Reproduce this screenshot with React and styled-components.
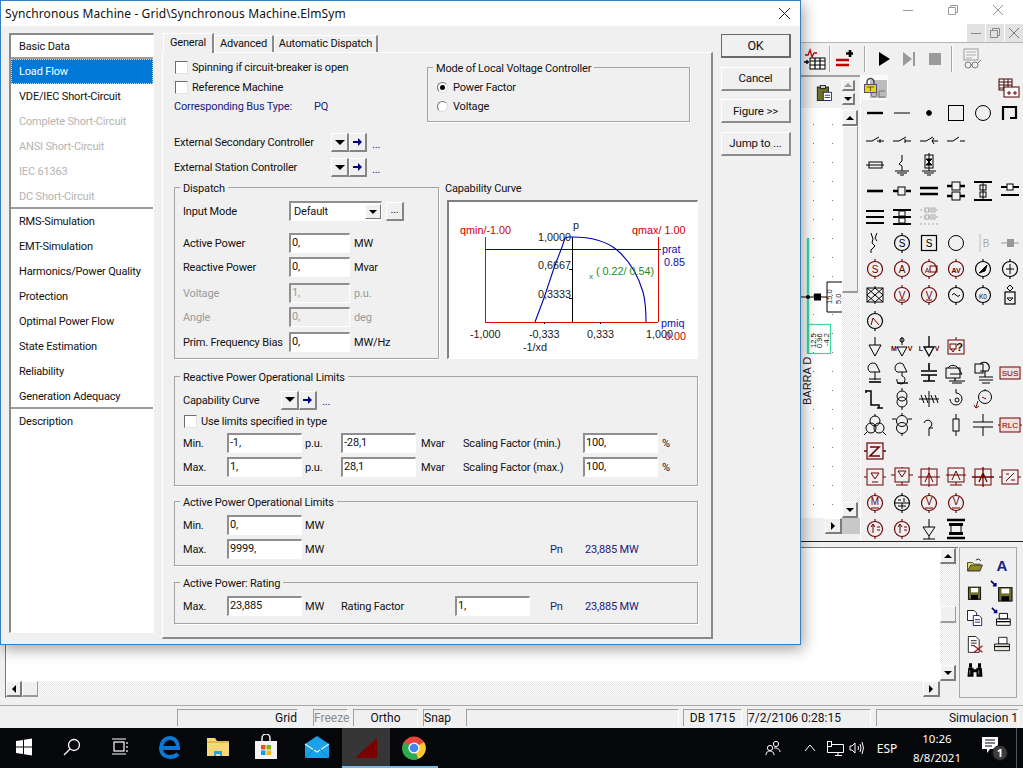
import styled, { createGlobalStyle } from "styled-components";

const UI_FONT = `"Roboto", "Liberation Sans", sans-serif`;
const SYS_FONT = `"Noto Sans", "Open Sans", sans-serif`;
const DARK_RED = "#6e0000";
const NAVY = "#20207a";

const GlobalStyle = createGlobalStyle`
  html, body {
    margin: 0;
    padding: 0;
    width: 1023px;
    height: 768px;
    overflow: hidden;
    background: #f0f0f0;
  }
  * { box-sizing: border-box; }
`;

/* ---------- main application window behind the dialog ---------- */

const Shell = styled.div`
  position: relative;
  width: 1023px;
  height: 768px;
  display: flex;
  flex-direction: column;
  overflow: hidden;
  background: #f0f0f0;
  font-family: ${UI_FONT};
`;
const AppTitle = styled.div`
  height: 24px;
  background: #fff;
  display: flex;
  justify-content: flex-end;
  align-items: flex-start;
  padding: 4px 19px 0 0;
  gap: 33px;
`;
const MdiBar = styled.div`
  height: 19px;
  background: #fff;
  border-bottom: 1px solid #b4b4b4;
  display: flex;
  justify-content: flex-end;
  gap: 1px;
`;
const MdiButton = styled.div`
  width: 18px;
  height: 18px;
  background: #e2e2e2;
  display: flex;
  align-items: center;
  justify-content: center;
`;
const Toolbar = styled.div`
  height: 32px;
  display: flex;
  align-items: center;
  padding-left: 803px;
`;
const ToolSlot = styled.div`
  width: 24px;
  height: 24px;
  margin-left: ${(p) => p.$ml || 0}px;
  display: flex;
`;
const ToolSep = styled.div`
  width: 2px;
  height: 26px;
  margin-left: ${(p) => p.$ml || 0}px;
  background: #a8a8a8;
  border-right: 1px solid #fff;
`;
const Workspace = styled.div`
  height: 466px;
  display: flex;
`;
const CanvasColumn = styled.div`
  flex: 1;
  display: flex;
  flex-direction: column;
`;
const DrawStrip = styled.div`
  height: 33px;
  border-top: 2px solid #a0a0a0;
  display: flex;
  align-items: center;
  padding-left: 815px;
`;
const MiniScroll = styled.div`
  margin-left: 9px;
  display: flex;
  flex-direction: column;
  gap: 2px;
`;
const CanvasRow = styled.div`
  height: 410px;
  display: flex;
`;
const Canvas = styled.div`
  position: relative;
  flex: 1;
  background-color: #fff;
  background-image: radial-gradient(circle, #777 0.6px, transparent 0.9px);
  background-size: 19px 19px;
  background-position: 6px 7px;
`;
const Diagram = styled.svg`
  position: absolute;
  right: 0;
  top: 0;
  width: 42px;
  height: 410px;
`;
const VScroll = styled.div`
  width: 18px;
  display: flex;
  flex-direction: column;
  padding-top: ${(p) => p.$pt || 0}px;
  background: repeating-conic-gradient(#e4e4e4 0 25%, #fff 0 50%) 0 0 / 2px 2px;
`;
const HScrollRow = styled.div`
  height: 16px;
  display: flex;
  justify-content: flex-end;
`;
const ScrollCorner = styled.div`
  width: 18px;
  background: #c8c8c8;
`;
const ScrollBtn = styled.div`
  width: ${(p) => p.$w || 16}px;
  height: ${(p) => p.$h || 16}px;
  flex: none;
  background: #f0f0f0;
  border-top: 1px solid #fff;
  border-left: 1px solid #fff;
  border-right: 2px solid #7c7c7c;
  border-bottom: 2px solid #7c7c7c;
  display: flex;
  align-items: center;
  justify-content: center;
`;
const Arrow = styled.span`
  width: 0;
  height: 0;
  border: ${(p) => (p.$big ? 5 : 4)}px solid transparent;
  ${(p) => p.$dir === "up" && `border-bottom-color: ${p.$c || "#000"}; border-top-width: 0;`}
  ${(p) => p.$dir === "down" && `border-top-color: ${p.$c || "#000"}; border-bottom-width: 0;`}
  ${(p) => p.$dir === "left" && `border-right-color: ${p.$c || "#000"}; border-left-width: 0;`}
  ${(p) => p.$dir === "right" && `border-left-color: ${p.$c || "#000"}; border-right-width: 0;`}
`;
const Thumb = styled.div`
  width: ${(p) => p.$w || 16}px;
  height: ${(p) => p.$h || 16}px;
  flex: none;
  background: #f0f0f0;
  border-top: 1px solid #fff;
  border-left: 1px solid #fff;
  border-right: 1px solid #9a9a9a;
  border-bottom: 2px solid #9a9a9a;
`;
const Spacer = styled.div`
  flex: 1;
`;
const Palette = styled.div`
  width: 163px;
  display: grid;
  grid-template-columns: repeat(6, 27px);
  grid-template-rows: 25px;
  grid-auto-rows: 26px;
  overflow: hidden;
  border-left: 1px solid #fff;
`;
const PaletteCell = styled.div`
  display: flex;
  align-items: center;
  justify-content: center;
  background: ${(p) => (p.$pressed ? "#fafafa" : "transparent")};
`;
const GlyphSvg = styled.svg`
  width: ${(p) => p.$size}px;
  height: ${(p) => p.$size}px;
  flex: none;
  fill: none;
  stroke-width: 1;
  stroke: #000;
`;
const DarkLine = styled.div`
  height: 1px;
  background: #222;
`;
const OutputArea = styled.div`
  height: 156px;
  padding: 5px 6px 0 5px;
  display: flex;
`;
const OutputMain = styled.div`
  flex: 1;
  display: flex;
  flex-direction: column;
  border-left: 1px solid #777;
  border-top: 1px solid #777;
  height: 151px;
`;
const OutputTop = styled.div`
  height: 133px;
  display: flex;
`;
const OutputText = styled.div`
  flex: 1;
  background: #fff;
`;
const OutputHScroll = styled.div`
  height: 16px;
  display: flex;
  background: repeating-conic-gradient(#e4e4e4 0 25%, #fff 0 50%) 0 0 / 2px 2px;
`;
const OutputCorner = styled.div`
  width: 18px;
  background: #f0f0f0;
`;
const OutputTools = styled.div`
  width: 58px;
  height: 151px;
  margin-left: 1px;
  border: 1px solid #a8a8a8;
  display: grid;
  grid-template-columns: 27px 27px;
  grid-auto-rows: 26.25px;
  justify-items: center;
  align-items: center;
  padding: 4px 0 0 1px;
`;
const StatusBar = styled.div`
  margin-top: 7px;
  height: 23px;
  border-top: 1px solid #a8a8a8;
  padding-top: 3px;
  display: flex;
  font-family: ${UI_FONT};
  font-size: 12px;
`;
const StatusCell = styled.div`
  width: ${(p) => p.$w}px;
  height: 17px;
  margin-left: ${(p) => p.$ml}px;
  border-top: 1px solid #a0a0a0;
  border-left: 1px solid #a0a0a0;
  border-right: 1px solid #fff;
  color: ${(p) => (p.$off ? "#8c8c8c" : "#111")};
  text-align: ${(p) => p.$align || "right"};
  line-height: 17px;
  white-space: nowrap;
`;

/* ---------- taskbar ---------- */

const Taskbar = styled.div`
  height: 40px;
  background: #05070a;
  display: flex;
  align-items: stretch;
  font-family: ${SYS_FONT};
  color: #fff;
`;
const TaskButton = styled.div`
  width: 48px;
  margin-left: ${(p) => p.$ml || 0}px;
  display: flex;
  align-items: center;
  justify-content: center;
  background: ${(p) => (p.$active ? "#363636" : "transparent")};
  border-bottom: 2px solid ${(p) => (p.$open ? "#76b9ed" : "transparent")};
  padding-top: ${(p) => (p.$open ? 2 : 0)}px;
`;
const Tray = styled.div`
  margin-left: auto;
  display: flex;
  align-items: stretch;
`;
const TrayItem = styled.div`
  width: ${(p) => p.$w}px;
  margin-left: ${(p) => p.$ml || 0}px;
  display: flex;
  align-items: center;
  justify-content: center;
  font-size: 12px;
  position: relative;
`;
const Clock = styled.div`
  width: 62px;
  display: flex;
  flex-direction: column;
  align-items: center;
  justify-content: center;
  gap: 3px;
  font-size: 11.5px;
  line-height: 16px;
`;
const ShowDesktop = styled.div`
  width: 7px;
  border-left: 1px solid #555;
`;
const NotifyIcon = styled.svg`
  margin: 0 0 6px -4px;
`;
const NotifyBadge = styled.span`
  position: absolute;
  left: 24px;
  top: 17px;
  width: 16px;
  height: 16px;
  border-radius: 50%;
  background: #3c3c3c;
  border: 1px solid #111;
  font-size: 11px;
  font-weight: 700;
  line-height: 14px;
  text-align: center;
`;

/* ---------- dialog ---------- */

const Dialog = styled.div`
  position: absolute;
  left: 0;
  top: 0;
  width: 801px;
  height: 645px;
  background: #f0f0f0;
  border: 1px solid #3580c0;
  box-shadow: 2px 4px 14px rgba(0, 0, 0, 0.38);
  display: flex;
  flex-direction: column;
  color: #111;
  font-family: ${UI_FONT};
  font-size: 11px;
  letter-spacing: -0.17px;
`;
const DialogTitle = styled.div`
  height: 25px;
  background: #fff;
  display: flex;
  align-items: center;
  justify-content: space-between;
  padding: 0 9px 0 4px;
  font-family: ${SYS_FONT};
  font-size: 12px;
  letter-spacing: 0.1px;
  color: #111;
`;
const DialogBody = styled.div`
  flex: 1;
  display: flex;
  padding: 7px 0 4px 8px;
`;
const NavList = styled.div`
  width: 145px;
  height: 600px;
  background: #fff;
  border-top: 2px solid #8a8a8a;
  border-left: 2px solid #8a8a8a;
  border-right: 1px solid #fff;
  border-bottom: 1px solid #fff;
  flex: none;
`;
const NavItem = styled.div`
  height: 25px;
  padding-left: 8px;
  display: flex;
  align-items: center;
  color: ${(p) => (p.$selected ? "#fff" : p.$off ? "#b4b4b4" : "#111")};
  background: ${(p) => (p.$selected ? "#0078d7" : "transparent")};
  outline: ${(p) => (p.$selected ? "1px dotted #c8dff2" : "none")};
  outline-offset: -1px;
  box-shadow: ${(p) => (p.$line ? "0 -2px 0 #9c9c9c" : "none")};
  &:first-child {
    height: 24px;
    padding-bottom: 1px;
  }
`;
const MainColumn = styled.div`
  width: 551px;
  margin-left: 8px;
  display: flex;
  flex-direction: column;
  flex: none;
`;
const TabRow = styled.div`
  height: 19px;
  display: flex;
  align-items: flex-end;
  padding-left: 1px;
  position: relative;
`;
const Tab = styled.div`
  width: ${(p) => p.$w}px;
  height: ${(p) => (p.$active ? 20 : 17)}px;
  margin-bottom: ${(p) => (p.$active ? -1 : 0)}px;
  padding-bottom: ${(p) => (p.$active ? 3 : 2)}px;
  background: #f0f0f0;
  border-top: 1px solid #fff;
  border-left: 1px solid #fff;
  border-right: 2px solid #8a8a8a;
  display: flex;
  align-items: center;
  justify-content: center;
  position: relative;
`;
const TabPanel = styled.div`
  height: 587px;
  border-top: 1px solid #fff;
  border-left: 1px solid #fff;
  border-right: 2px solid #8a8a8a;
  border-bottom: 2px solid #8a8a8a;
  padding: 4px 0 0 11px;
  display: flex;
  flex-direction: column;
`;
const TopRow = styled.div`
  display: flex;
  justify-content: space-between;
  height: 65px;
`;
const CheckColumn = styled.div`
  display: flex;
  flex-direction: column;
`;
const CheckRow = styled.div`
  height: ${(p) => p.$h || 20}px;
  display: flex;
  align-items: center;
  gap: 4px;
  color: ${(p) => p.$color || "inherit"};
`;
const CheckBox = styled.span`
  width: 13px;
  height: 13px;
  margin-left: 1px;
  background: #fff;
  border-top: 1px solid #6e6e6e;
  border-left: 1px solid #6e6e6e;
  border-right: 1px solid #e2e2e2;
  border-bottom: 1px solid #e2e2e2;
`;
const BusLabel = styled.span`
  width: 136px;
`;
const Group = styled.fieldset`
  margin: ${(p) => p.$mt || 0}px 0 0 0;
  width: ${(p) => p.$w}px;
  height: ${(p) => p.$h}px;
  padding: 5px 0 0 8px;
  min-width: 0;
  flex: none;
  border: 1px solid #a4a4a4;
  box-shadow: 1px 1px 0 #fff;
`;
const Legend = styled.legend`
  margin-left: -3px;
  padding: 2px 3px 0;
  height: 14px;
  line-height: 14px;
  color: #111;
`;
const ModeGroup = styled(Group)`
  margin-right: 21px;
  padding-top: 4px;
`;
const RadioRow = styled.div`
  height: 19px;
  display: flex;
  align-items: center;
  gap: 5px;
  margin-left: 1px;
`;
const Radio = styled.span`
  width: 11px;
  height: 11px;
  border-radius: 50%;
  background: #fff;
  border: 1px solid #777;
  border-bottom-color: #ddd;
  border-right-color: #ddd;
  display: flex;
  align-items: center;
  justify-content: center;
`;
const RadioDot = styled.span`
  width: 5px;
  height: 5px;
  border-radius: 50%;
  background: #000;
`;
const ControllerRow = styled.div`
  height: 25px;
  display: flex;
  align-items: center;
  margin-top: ${(p) => p.$mt || 0}px;
`;
const ControllerLabel = styled.span`
  width: ${(p) => p.$w}px;
  flex: none;
`;
const SplitButton = styled.div`
  width: 18px;
  height: 19px;
  flex: none;
  background: #f0f0f0;
  border-top: 1px solid #fff;
  border-left: 1px solid #fff;
  border-right: 2px solid #858585;
  border-bottom: 2px solid #858585;
  display: flex;
  align-items: center;
  justify-content: center;
`;
const Ellipsis = styled.span`
  margin-left: 5px;
  color: ${NAVY};
  align-self: flex-end;
  padding-bottom: 5px;
  line-height: 10px;
`;
const MiddleRow = styled.div`
  display: flex;
  gap: 6px;
  height: 179px;
`;
const FormRow = styled.div`
  height: 24px;
  margin-top: ${(p) => p.$mt || 0}px;
  display: flex;
  align-items: center;
  color: ${(p) => (p.$off ? "#9a9a9a" : "inherit")};
`;
const FormLabel = styled.span`
  width: 106px;
  flex: none;
  white-space: nowrap;
`;
const Field = styled.div`
  width: ${(p) => p.$w}px;
  height: 20px;
  flex: none;
  background: ${(p) => (p.$off ? "#f0f0f0" : "#fff")};
  color: ${(p) => (p.$off ? "#9a9a9a" : "#111")};
  border-top: 2px solid #8f8f8f;
  border-left: 2px solid #8f8f8f;
  border-right: 1px solid #fff;
  border-bottom: 1px solid #fff;
  padding-left: 1px;
  line-height: 16px;
  white-space: nowrap;
`;
const Unit = styled.span`
  margin-left: 4px;
`;
const Combo = styled(Field)`
  display: flex;
  justify-content: space-between;
  align-items: center;
  padding-left: 3px;
`;
const ComboBtn = styled.span`
  width: 16px;
  height: 15px;
  background: #f0f0f0;
  border-top: 1px solid #fff;
  border-left: 1px solid #fff;
  border-right: 1px solid #777;
  border-bottom: 1px solid #777;
  display: flex;
  align-items: center;
  justify-content: center;
`;
const SmallBtn = styled.div`
  width: 18px;
  height: 19px;
  margin-left: 4px;
  background: #f0f0f0;
  border-top: 1px solid #fff;
  border-left: 1px solid #fff;
  border-right: 2px solid #858585;
  border-bottom: 2px solid #858585;
  text-align: center;
  line-height: 13px;
`;
const CurveColumn = styled.div`
  width: 252px;
  display: flex;
  flex-direction: column;
`;
const CurveTitle = styled.div`
  height: 20px;
  padding-top: 1px;
  line-height: 15px;
`;
const PlotBox = styled.div`
  width: 251px;
  height: 159px;
  margin-left: 2px;
  background: #fff;
  border-top: 2px solid #808080;
  border-left: 2px solid #808080;
  border-right: 1px solid #fff;
  border-bottom: 1px solid #fff;
`;
const PlotSvg = styled.svg`
  display: block;
  margin: -2px 0 0 -2px;
  font-family: "Liberation Sans", sans-serif;
  font-size: 10.8px;
  letter-spacing: 0;
`;
const LimitGrid = styled.div`
  display: grid;
  grid-template-columns: ${(p) => p.$cols};
  grid-auto-rows: 24px;
  align-items: center;
  white-space: nowrap;
`;
const UnitCell = styled.span`
  padding-left: ${(p) => p.$pl ?? 4}px;
  color: ${(p) => (p.$navy ? NAVY : "inherit")};
`;
const ButtonColumn = styled.div`
  width: 70px;
  margin: 1px 0 0 8px;
  display: flex;
  flex-direction: column;
  gap: 8.5px;
`;
const DlgButton = styled.div`
  height: 24px;
  background: #f0f0f0;
  border-top: 1px solid ${(p) => (p.$def ? "#6a6a6a" : "#fff")};
  border-left: 1px solid ${(p) => (p.$def ? "#6a6a6a" : "#fff")};
  border-right: 2px solid ${(p) => (p.$def ? "#6a6a6a" : "#8c8c8c")};
  border-bottom: 2px solid ${(p) => (p.$def ? "#6a6a6a" : "#8c8c8c")};
  display: flex;
  align-items: center;
  justify-content: center;
  font-size: ${(p) => p.$fs || 11.5}px;
`;

/* ---------- small drawings ---------- */

const Glyph = ({ children, size = 24 }) => (
  <GlyphSvg viewBox="0 0 24 24" $size={size}>
    {children}
  </GlyphSvg>
);

const Letter = ({ x = 12, y = 15.5, s = 10, c = DARK_RED, w = 400, children }) => (
  <text x={x} y={y} fontSize={s} fill={c} stroke="none" textAnchor="middle" fontFamily="Liberation Sans, sans-serif" fontWeight={w}>
    {children}
  </text>
);

// round meter symbol with a lead on top and bottom
const Meter = ({ c = "#000", children }) => (
  <>
    <circle cx="12" cy="12" r="7.5" stroke={c} strokeWidth="1.15" />
    <path d="M12 2v2.5M12 19.5V22" stroke={c} strokeWidth="1.15" />
    {children}
  </>
);

const R = DARK_RED;

const PALETTE = [
  // lock row
  [
    <>
      <rect x="7" y="4" width="17" height="18" fill="#bcbcbc" stroke="none" />
      <circle cx="11" cy="18" r="3" stroke="#777" />
      <path d="M16 15h6M16 21h6M16 15v6" stroke="#777" />
      <path d="M4 9V6a3.5 3.5 0 0 1 7 0v3" stroke="#444" strokeWidth="1.4" />
      <rect x="1.5" y="8.5" width="12" height="8" fill="#e6d800" stroke="#555" />
      <path d="M4 11h7M7.5 11v4" stroke="#555" />
    </>,
    null, null, null, null,
    <>
      <rect x="1" y="3" width="13" height="11" fill="#fff" stroke="#400" />
      <path d="M1 6h13M1 9h13M1 12h13M6 3v11M10 3v11" stroke="#400" />
      <rect x="6" y="11" width="15" height="10" fill="#fff" stroke="#400" />
      <path d="M9 17h4M11 15v4M15 17h4M17 15v4" stroke={R} />
    </>,
  ],
  [
    <path d="M4 12h16" strokeWidth="2.4" />,
    <path d="M4 12h16" />,
    <circle cx="12" cy="12" r="2.4" fill="#000" />,
    <rect x="4.5" y="4.5" width="15" height="15" />,
    <circle cx="12" cy="12" r="7.5" />,
    <path d="M5 19V6h13v11h-6" strokeWidth="2.2" />,
  ],
  [
    <path d="M3 14h6l7-4M14 14h7M17 12v4" />,
    <path d="M3 14h6l7-4M15 14h6M15 12v4" />,
    <path d="M3 14h6l7-4M15 14h6M17 11l-2 3 2 3" />,
    <path d="M3 14h6l6-4M16 14h5" />,
    null, null,
  ],
  [
    <>
      <rect x="6" y="9" width="13" height="6" />
      <path d="M3 12h18" />
    </>,
    <path d="M12 2v6l-3 3 3 2v5M5 18h14M7 20h10M10 22h4" />,
    <>
      <rect x="8" y="2" width="8" height="13" />
      <path d="M12 0v15M12 15v3M5 18h14M7 20h10M10 22h4" />
      <path d="M9 6h6l-3 3zM9 12h6l-3-3z" fill="#000" />
    </>,
    null, null, null,
  ],
  [
    <path d="M4 12h16" strokeWidth="2.6" />,
    <>
      <path d="M3 12h5M16 12h5" strokeWidth="2.6" />
      <rect x="8" y="8" width="7" height="8" />
    </>,
    <path d="M3 9h18M3 15h18" strokeWidth="2.6" />,
    <>
      <path d="M3 7h5M16 7h5M3 17h5M16 17h5" strokeWidth="2.6" />
      <rect x="8" y="3" width="8" height="8" />
      <rect x="8" y="13" width="8" height="8" />
    </>,
    <>
      <path d="M3 3h18M3 21h18" strokeWidth="2.2" />
      <rect x="9" y="6" width="6" height="5" />
      <rect x="9" y="13" width="6" height="5" />
      <path d="M12 3v18" />
    </>,
    <>
      <path d="M3 8h18M3 16h18" strokeWidth="2" />
      <rect x="9" y="5" width="6" height="6" fill="#fff" />
    </>,
  ],
  [
    <path d="M3 6h18M3 12h18M3 18h18" strokeWidth="2.2" />,
    <>
      <path d="M3 5h18M3 12h18M3 19h18" strokeWidth="2" />
      <rect x="9" y="6" width="6" height="5" fill="#fff" />
      <rect x="9" y="13" width="6" height="5" fill="#fff" />
    </>,
    <>
      <path d="M3 5h18M3 12h18M3 19h18" stroke="#aaa" strokeDasharray="2 2" />
      <rect x="8" y="3" width="4" height="4" stroke="#aaa" />
      <rect x="14" y="3" width="4" height="4" stroke="#aaa" />
      <rect x="8" y="10" width="4" height="4" stroke="#aaa" />
      <rect x="14" y="10" width="4" height="4" stroke="#aaa" />
    </>,
    null, null, null,
  ],
  [
    <path d="M8 2l2 6-1 4 3 3-4 4v3M14 2l-2 5 2 3" />,
    <Meter>
      <Letter c="#000">S</Letter>
    </Meter>,
    <>
      <rect x="4.5" y="4.5" width="15" height="15" strokeWidth="1.2" />
      <Letter c="#000">S</Letter>
    </>,
    <circle cx="12" cy="12" r="7.5" />,
    <>
      <path d="M9 3v18" stroke="#bbb" />
      <Letter x={15} c="#aaa">B</Letter>
    </>,
    <>
      <path d="M3 12h18" stroke="#999" />
      <rect x="9" y="8" width="7" height="8" fill="#999" stroke="none" />
    </>,
  ],
  [
    <Meter c={R}><Letter>S</Letter></Meter>,
    <Meter c={R}><Letter>A</Letter></Meter>,
    <Meter c={R}><Letter x={10} s={7}>A</Letter><rect x="13" y="9" width="7" height="6" stroke={R} /></Meter>,
    <Meter c={R}><Letter s={7} w={700}>AV</Letter></Meter>,
    <Meter><path d="M8 16l8-8-2 6z" fill="#000" /></Meter>,
    <Meter><path d="M12 7v10M8 12h8" /></Meter>,
  ],
  [
    <>
      <rect x="4" y="5" width="16" height="14" />
      <path d="M4 5l16 14M20 5L4 19M4 12l8-7 8 7-8 7z" />
      <path d="M12 3v2M12 19v2" />
    </>,
    <Meter c={R}><Letter>V</Letter><path d="M9 17h6" stroke={R} /></Meter>,
    <Meter c={R}><Letter>V</Letter><path d="M9 17h6" stroke={R} /></Meter>,
    <Meter><path d="M8 12q2-3 4 0t4 0" /></Meter>,
    <Meter><Letter s={6.5} c="#000">K0</Letter></Meter>,
    <>
      <rect x="7" y="9" width="10" height="12" strokeWidth="1.2" />
      <path d="M12 2l3 3-3 3-3-3zM9 15h6l-3 3z" />
    </>,
  ],
  [
    <Meter><path d="M8 16l2-7 6 7" stroke={R} /></Meter>,
    null, null, null, null, null,
  ],
  [
    <path d="M12 2v8M6 10h12l-6 11z" />,
    <>
      <Letter x={4} s={7} w={700}>M</Letter>
      <Letter x={20} s={7} w={700}>V</Letter>
      <circle cx="12" cy="5" r="2" />
      <path d="M12 2v8M7 12h10l-5 9z" />
    </>,
    <>
      <Letter x={4} s={7} w={700}>L</Letter>
      <Letter x={20} s={7} w={700}>V</Letter>
      <path d="M12 1v11M7 12h10l-5 9z" strokeWidth="1.3" />
    </>,
    <>
      <rect x="4" y="5" width="16" height="14" stroke={R} />
      <path d="M12 2v3" stroke={R} />
      <Letter x={15.5} s={11} c="#300" w={700}>?</Letter>
      <rect x="6" y="9" width="6" height="5" stroke={R} />
      <path d="M7 14l2 3 2-3" stroke={R} />
    </>,
    null, null,
  ],
  [
    <>
      <path d="M7 11a5 5 0 0 1 6-8l4 8H7zM12 11v8M6 18h12" />
      <path d="M6 21h12" strokeWidth="1.6" />
    </>,
    <>
      <path d="M7 11a5 5 0 0 1 6-8l4 8H7z" />
      <path d="M12 11v4a4 4 0 1 1-5 3" />
      <path d="M7 22h11" strokeWidth="1.4" />
    </>,
    <path d="M12 2v7M4 10h16M4 14h16M12 14v6M6 20h12" strokeWidth="1.6" />,
    <>
      <rect x="2" y="7" width="14" height="10" />
      <path d="M4 7a6 6 0 0 1 10 0l4 6H6" />
      <path d="M11 17v3M5 20h16M8 22h10" strokeWidth="1.2" />
    </>,
    <>
      <rect x="4" y="3" width="8" height="9" />
      <path d="M9 3a5 5 0 0 1 8 7H9M14 10v6M8 16h14M8 19h14M11 22h8" strokeWidth="1.1" />
    </>,
    <>
      <rect x="2" y="6" width="20" height="12" fill="#f2dede" stroke={R} />
      <Letter y={15} s={8} c={R}>SUS</Letter>
    </>,
  ],
  [
    <path d="M3 4h5v14h8v3M14 21h6M3 3v3" strokeWidth="1.5" />,
    <>
      <circle cx="12" cy="9" r="5" />
      <circle cx="12" cy="15" r="5" />
      <path d="M12 1v3M12 20v3" />
    </>,
    <path d="M2 12h20M12 4v16M4 8l3 8M8 8l3 8M14 8l3 8M18 8l3 8" />,
    <>
      <path d="M12 2v4a6 6 0 1 1-6 6" />
      <circle cx="13" cy="13" r="2" />
    </>,
    <>
      <circle cx="14" cy="10" r="6.5" />
      <path d="M14 2v2M7 14l-2 6M3 18l2 3 3-2M11 10l4 2" stroke={R} />
    </>,
    null,
  ],
  [
    <>
      <circle cx="12" cy="8" r="5" />
      <circle cx="8" cy="15" r="5" />
      <circle cx="16" cy="15" r="5" />
      <path d="M12 1v2M4 19l-3 3M20 19l3 3" />
    </>,
    <>
      <circle cx="12" cy="8" r="5.5" />
      <circle cx="12" cy="15" r="5.5" />
      <path d="M12 0v3M12 20v3M2 6h4M18 6h4" />
    </>,
    <path d="M12 23v-8a4 4 0 1 0-5-5M12 15h4" />,
    <>
      <rect x="9" y="6" width="6" height="12" />
      <path d="M12 1v5M12 18v5" />
    </>,
    <path d="M12 1v8M2 9h20M2 14h20M12 14v9" />,
    <>
      <rect x="2" y="5" width="20" height="14" fill="#f2dede" stroke={R} />
      <path d="M0 12h2M22 12h2" stroke={R} />
      <Letter y={15} s={8} c={R}>RLC</Letter>
    </>,
  ],
  [
    <>
      <rect x="4" y="4" width="16" height="16" stroke={R} strokeWidth="1.2" />
      <path d="M7 8h9l-9 9h10M1 12h3M20 12h3" stroke={R} strokeWidth="1.6" />
    </>,
    null, null, null, null, null,
  ],
  [
    <>
      <rect x="4" y="4" width="16" height="16" stroke={R} />
      <path d="M8 8h8l-4 6zM9 17h6M1 12h3M20 12h3" stroke={R} />
    </>,
    <>
      <rect x="5" y="3" width="14" height="14" stroke={R} />
      <path d="M8 6h8l-4 6zM12 2v1M1 10h4M19 10h4M12 17v3M6 20h12" stroke={R} />
    </>,
    <>
      <rect x="4" y="4" width="16" height="16" stroke={R} />
      <path d="M1 12h22M8 17l4-9 4 9M12 2v20" stroke={R} />
    </>,
    <>
      <rect x="4" y="3" width="16" height="14" stroke={R} />
      <path d="M2 10h20M8 15l4-9 4 9M12 17v3M6 20h12" stroke={R} />
    </>,
    <>
      <rect x="4" y="4" width="16" height="16" stroke={R} />
      <path d="M1 12h22M8 17l4-9 4 9M12 2v20" stroke={R} strokeWidth="1.3" />
    </>,
    <>
      <rect x="4" y="5" width="16" height="14" stroke={R} />
      <path d="M1 12h3M20 12h3M8 16l8-8M8 9h3M13 15h4" stroke={R} />
    </>,
  ],
  [
    <Meter c={R}><Letter y={14}>M</Letter><path d="M8 17h8" stroke={R} /></Meter>,
    <Meter><path d="M5 12h14M8 9h3M14 7v4M8 15h8M12 12v6" /></Meter>,
    <Meter c={R}><Letter y={14}>V</Letter><path d="M8 17h8" stroke={R} /></Meter>,
    <Meter c={R}><Letter y={14}>V</Letter><path d="M8 17h8" stroke={R} /></Meter>,
    null, null,
  ],
  [
    <Meter c={R}><path d="M10 16V8M8 10l2-3 2 3M14 10h3M14 13h3" stroke={R} /></Meter>,
    <Meter c={R}><path d="M10 16V8M8 10l2-3 2 3M14 10h3M14 13h3" stroke={R} /></Meter>,
    <path d="M12 2v8M6 10h12l-6 9zM12 19v3M6 22h12" />,
    <>
      <path d="M3 3h18M3 21h18" strokeWidth="2.4" />
      <rect x="5" y="6" width="14" height="3" fill="#000" stroke="none" />
      <rect x="5" y="15" width="14" height="3" fill="#000" stroke="none" />
      <path d="M7 9v6M17 9v6" />
    </>,
    null, null,
  ],
];

const Plot = () => (
  <PlotSvg width="250" height="159" viewBox="0 0 250 159">
    <g shapeRendering="crispEdges" fill="none">
      <path d="M38 122V37M211 122V37M38 122h173" stroke="#d80808" />
      <path d="M38 49h176" stroke="#0000b0" />
      <path d="M125 37v85" stroke="#000" />
      <path d="M122 69h3M122 98h3M97 122v2M153 122v2" stroke="#000" />
    </g>
    <path
      d="M88 122L97 98L107 68L115 47L118 38L122 37L125 37C140 37 158 40 170 50C184 62 191 75 196 92C199 103 199 112 199 122"
      stroke="#0000b0"
      strokeWidth="1.1"
      fill="none"
    />
    <g fill="#1a1a1a">
      <text x="126" y="29">p</text>
      <text x="91" y="41">1,0000</text>
      <text x="91" y="69">0,6667</text>
      <text x="91" y="98">0,3333</text>
      <text x="23" y="138">-1,000</text>
      <text x="82" y="138">-0,333</text>
      <text x="140" y="138">0,333</text>
      <text x="199" y="138">1,000</text>
      <text x="76" y="151">-1/xd</text>
    </g>
    <g fill="#c80000">
      <text x="13" y="34">qmin/-1.00</text>
      <text x="185" y="34">qmax/ 1.00</text>
      <text x="218" y="140">0.00</text>
    </g>
    <g fill="#1010a8">
      <text x="215" y="53">prat</text>
      <text x="217" y="66">0.85</text>
      <text x="214" y="127">pmiq</text>
    </g>
    <g fill="#1f8a1f">
      <text x="149" y="75">( 0.22/ 0.54)</text>
      <text x="142" y="79" fontSize="8">x</text>
    </g>
  </PlotSvg>
);

const ArrowPair = () => (
  <>
    <SplitButton>
      <Arrow $dir="down" $big />
    </SplitButton>
    <SplitButton>
      <svg width="10" height="10" viewBox="0 0 10 10">
        <path d="M0 4h5V1l4 4-4 4V6H0z" fill="#000080" />
      </svg>
    </SplitButton>
  </>
);

const CapabilityRowLimits = ({ label, a, b, scaling, c }) => (
  <>
    <span>{label}</span>
    <Field $w={75}>{a}</Field>
    <UnitCell>p.u.</UnitCell>
    <Field $w={75}>{b}</Field>
    <UnitCell $pl={5}>Mvar</UnitCell>
    <span>{scaling}</span>
    <Field $w={75}>{c}</Field>
    <UnitCell>%</UnitCell>
  </>
);

const NAV = [
  { t: "Basic Data" },
  { t: "Load Flow", selected: true, line: true },
  { t: "VDE/IEC Short-Circuit" },
  { t: "Complete Short-Circuit", off: true },
  { t: "ANSI Short-Circuit", off: true },
  { t: "IEC 61363", off: true },
  { t: "DC Short-Circuit", off: true },
  { t: "RMS-Simulation", line: true },
  { t: "EMT-Simulation" },
  { t: "Harmonics/Power Quality" },
  { t: "Protection" },
  { t: "Optimal Power Flow" },
  { t: "State Estimation" },
  { t: "Reliability" },
  { t: "Generation Adequacy" },
  { t: "Description", line: true },
];

const ToolIcons = () => (
  <>
    <ToolSlot>
      <Glyph>
        <path d="M2 8h3l2-5 2 7 2-4h3" stroke="#c00000" strokeWidth="1.3" />
        <path d="M1 15h5M4 13v4" strokeWidth="1.4" />
        <rect x="7" y="11" width="15" height="11" fill="#fff" />
        <path d="M7 14h15M7 18h15M12 11v11M17 11v11" strokeWidth="1.2" />
      </Glyph>
    </ToolSlot>
    <ToolSep $ml={2} />
    <ToolSlot $ml={1}>
      <Glyph>
        <path d="M4 13h13M4 18h13" stroke="#c00000" strokeWidth="2.6" />
        <path d="M18 3v7M14 6.5h7" strokeWidth="2.6" />
      </Glyph>
    </ToolSlot>
    <ToolSep $ml={8} />
    <ToolSlot $ml={6}>
      <Glyph>
        <path d="M7 5l11 7-11 7z" fill="#000" stroke="none" />
      </Glyph>
    </ToolSlot>
    <ToolSlot $ml={1}>
      <Glyph>
        <path d="M6 5l9 7-9 7z" fill="#9a9a9a" stroke="none" />
        <path d="M17 5v14" stroke="#9a9a9a" strokeWidth="2" />
      </Glyph>
    </ToolSlot>
    <ToolSlot $ml={2}>
      <Glyph>
        <rect x="6" y="6" width="12" height="12" fill="#9a9a9a" stroke="none" />
      </Glyph>
    </ToolSlot>
    <ToolSep $ml={4} />
    <ToolSlot $ml={6}>
      <Glyph>
        <rect x="5" y="2" width="14" height="11" stroke="#999" fill="#f4f4f4" />
        <path d="M7 5h10M7 8h10M7 11h6" stroke="#aaa" />
        <circle cx="9" cy="18" r="3" stroke="#777" />
        <circle cx="16" cy="18" r="3" stroke="#777" />
        <path d="M12 18h1M19 16l3-3" stroke="#777" />
      </Glyph>
    </ToolSlot>
  </>
);

const SaveIcon = () => (
  <>
    <rect x="5" y="7" width="14" height="14" fill="#6e6e28" stroke="#000" />
    <rect x="8" y="8" width="8" height="5" fill="#fff" stroke="none" />
    <rect x="8" y="16" width="8" height="5" fill="#000" stroke="none" />
  </>
);

const OutputIcons = () => (
  <>
    <Glyph size={20}>
      <path d="M3 9h6l2 2h7v8H3z" fill="#e8d870" stroke="#333" />
      <path d="M3 19l4-7h14l-3 7z" fill="#8a8a20" stroke="#333" />
      <path d="M13 6q4-3 6 1" stroke="#000" />
    </Glyph>
    <Glyph size={18}>
      <Letter s={20} c="#1a1a8a" w={700} y={20}>A</Letter>
    </Glyph>
    <Glyph size={21}>
      <SaveIcon />
    </Glyph>
    <Glyph size={23}>
      <path d="M1 1l5 5M3 6h3V3" stroke="#000080" strokeWidth="1.8" />
      <g transform="translate(4 1)"><SaveIcon /></g>
    </Glyph>
    <Glyph size={20}>
      <path d="M3 3h8l3 3v9H3z" fill="#fff" stroke="#000" />
      <path d="M10 9h7l3 3v9H10z" fill="#fff" stroke="#000060" />
      <path d="M12 14h6M12 17h6" stroke="#000060" />
    </Glyph>
    <Glyph size={22}>
      <path d="M1 1l5 5M3 6h3V3" stroke="#000080" strokeWidth="1.8" />
      <path d="M9 7h9v6H9zM6 13h15v7H6z" fill="#fff" stroke="#000" />
      <path d="M6 16h15" stroke="#000" strokeWidth="1.4" />
    </Glyph>
    <Glyph size={20}>
      <path d="M4 3h9l4 4v15H4z" fill="#fff" stroke="#000" />
      <path d="M7 8h7M7 11h7M7 14h5" stroke="#000" />
      <path d="M11 14l10 8M21 14l-10 8" stroke="#a02020" strokeWidth="1.6" />
    </Glyph>
    <Glyph size={20}>
      <path d="M8 4h10v8H8z" fill="#fff" stroke="#000" />
      <path d="M3 12h18v8H3z" fill="#e8e8d8" stroke="#000" />
      <path d="M3 15h18" stroke="#000" strokeWidth="1.4" />
    </Glyph>
    <Glyph size={18}>
      <path d="M3 9h7v12H2zM14 9h7l1 12h-8zM10 11h4v4h-4z" fill="#000" stroke="none" />
      <path d="M4 3h4v6H4zM16 3h4v6h-4z" fill="#000" stroke="none" />
      <path d="M5 12v6M17 12v6" stroke="#aaa" />
    </Glyph>
  </>
);

const TaskIcons = () => (
  <>
    <TaskButton>
      <svg width="18" height="18" viewBox="0 0 18 18">
        <path d="M1 3l7-1v6.5H1zM9 1.8L17 .6v7.9H9zM1 9.5h7V16l-7-1zM9 9.5h8v7.9l-8-1.2z" fill="#fff" />
      </svg>
    </TaskButton>
    <TaskButton>
      <svg width="18" height="18" viewBox="0 0 18 18" fill="none" stroke="#fff" strokeWidth="1.3">
        <circle cx="11" cy="7" r="5.5" />
        <path d="M7 11l-6 6" />
      </svg>
    </TaskButton>
    <TaskButton>
      <svg width="18" height="18" viewBox="0 0 18 18" fill="none" stroke="#fff" strokeWidth="1.2">
        <rect x="3" y="4" width="10" height="9" />
        <path d="M1 1h14M1 16h14M16 4v2M16 8v2M16 12v2" />
      </svg>
    </TaskButton>
    <TaskButton $ml={2}>
      <svg width="22" height="24" viewBox="0 0 22 24" fill="none" stroke="#0a78d4" strokeWidth="4">
        <path d="M3 13h16c0-6-3-10-8-10S3 6 2 13c0 6 4 9 9 9 3 0 6-1 8-3" />
      </svg>
    </TaskButton>
    <TaskButton>
      <svg width="24" height="22" viewBox="0 0 24 22">
        <path d="M1 2h8l2 3h12v15H1z" fill="#f6d87c" />
        <rect x="1" y="5" width="22" height="2" fill="#e0b94e" />
        <path d="M8 20v-5h8v5h-2v-2h-4v2z" fill="#2da1e0" />
      </svg>
    </TaskButton>
    <TaskButton>
      <svg width="24" height="26" viewBox="0 0 24 26">
        <path d="M8 7V4a4 4 0 0 1 8 0v3" fill="none" stroke="#eee" strokeWidth="1.5" />
        <rect x="1" y="7" width="22" height="18" fill="#f4f4f4" />
        <rect x="7" y="11" width="4.5" height="4.5" fill="#f25022" />
        <rect x="12.5" y="11" width="4.5" height="4.5" fill="#7fba00" />
        <rect x="7" y="16.5" width="4.5" height="4.5" fill="#00a4ef" />
        <rect x="12.5" y="16.5" width="4.5" height="4.5" fill="#ffb900" />
      </svg>
    </TaskButton>
    <TaskButton $ml={3}>
      <svg width="26" height="24" viewBox="0 0 26 24">
        <path d="M1 9L13 1l12 8v14H1z" fill="#1ba1e8" />
        <path d="M1 9l12 8 12-8" fill="none" stroke="#d8f0ff" strokeWidth="1.2" />
        <path d="M1 23l9-9M25 23l-9-9" stroke="#0c7cc4" />
      </svg>
    </TaskButton>
    <TaskButton $ml={1} $active $open>
      <svg width="22" height="20" viewBox="0 0 22 20">
        <path d="M0 20L22 0v20z" fill="#7b0000" />
      </svg>
    </TaskButton>
    <TaskButton $open>
      <svg width="24" height="24" viewBox="0 0 24 24">
        <circle cx="12" cy="12" r="11.5" fill="#e8453c" />
        <path d="M12 12L22 6a11.5 11.5 0 0 1-6 17z" fill="#fcc934" />
        <path d="M12 12l4 11A11.5 11.5 0 0 1 2 6z" fill="#2da94f" />
        <circle cx="12" cy="12" r="5.6" fill="#fff" />
        <circle cx="12" cy="12" r="4.3" fill="#4285f4" />
      </svg>
    </TaskButton>
  </>
);

const TrayIcons = () => (
  <Tray>
    <TrayItem $w={32}>
      <svg width="16" height="16" viewBox="0 0 16 16" fill="none" stroke="#fff">
        <circle cx="5" cy="8" r="2.6" />
        <path d="M1 15c0-3 2-4 4-4s4 1 4 4" />
        <circle cx="11" cy="4" r="2.6" />
        <path d="M9 8c3-.5 6 1 6 4" />
      </svg>
    </TrayItem>
    <TrayItem $w={24} $ml={9}>
      <svg width="12" height="8" viewBox="0 0 12 8" fill="none" stroke="#fff">
        <path d="M1 7l5-6 5 6" />
      </svg>
    </TrayItem>
    <TrayItem $w={26}>
      <svg width="17" height="15" viewBox="0 0 17 15" fill="none" stroke="#fff">
        <path d="M.5 3.5h16v8H5M8 14.5h7M11 11.5v3" />
        <rect x=".5" y=".5" width="4" height="5" fill="#05070a" />
        <path d="M.5 5.5v6H5" />
      </svg>
    </TrayItem>
    <TrayItem $w={18}>
      <svg width="16" height="14" viewBox="0 0 16 14" fill="none" stroke="#fff">
        <path d="M1 5h2l3-3v10L3 9H1zM9 5q1 2 0 4M11 3q2 4 0 8M13 1q3 6 0 12" />
      </svg>
    </TrayItem>
    <TrayItem $w={38} $ml={2}>ESP</TrayItem>
    <Clock>
      <span>10:26</span>
      <span>8/8/2021</span>
    </Clock>
    <TrayItem $w={48}>
      <NotifyIcon width="16" height="17" viewBox="0 0 16 17">
        <path d="M0 0h16v12H8l-3 4v-4H0z" fill="#fff" />
        <path d="M3 3h10M3 6h10M3 9h7" stroke="#05070a" />
      </NotifyIcon>
      <NotifyBadge>1</NotifyBadge>
    </TrayItem>
    <ShowDesktop />
  </Tray>
);

const WindowIcon = ({ kind, c = "#999" }) => (
  <svg width="12" height="12" viewBox="0 0 12 12" fill="none" stroke={c}>
    {kind === "min" && <path d="M1 6.5h10" />}
    {kind === "max" && <path d="M1.5 3.5h7v7h-7zM3.5 3.5v-2h7v7h-2" />}
    {kind === "close" && <path d="M1 1l10 10M11 1L1 11" />}
  </svg>
);

export default function App() {
  return (
    <Shell>
      <GlobalStyle />
      <AppTitle>
        <WindowIcon kind="min" />
        <WindowIcon kind="max" />
        <WindowIcon kind="close" />
      </AppTitle>
      <MdiBar>
        <MdiButton><WindowIcon kind="min" c="#888" /></MdiButton>
        <MdiButton><WindowIcon kind="max" c="#888" /></MdiButton>
        <MdiButton><WindowIcon kind="close" c="#777" /></MdiButton>
      </MdiBar>
      <Toolbar>
        <ToolIcons />
      </Toolbar>
      <Workspace>
        <CanvasColumn>
          <DrawStrip>
            <Glyph size={18}>
              <rect x="3" y="4" width="15" height="18" fill="#6e6e28" stroke="#000" />
              <rect x="7" y="2" width="7" height="4" fill="#ccc" stroke="#000" />
              <rect x="11" y="11" width="11" height="11" fill="#fff" stroke="#000060" />
              <path d="M13 15h7M13 18h7" stroke="#000060" />
            </Glyph>
            <MiniScroll>
              <ScrollBtn $w={13} $h={11}><Arrow $dir="up" $c="#999" /></ScrollBtn>
              <ScrollBtn $w={13} $h={12}><Arrow $dir="down" /></ScrollBtn>
            </MiniScroll>
          </DrawStrip>
          <CanvasRow>
            <Canvas>
              <Diagram viewBox="800 108 42 410">
                <path d="M808 238v116" stroke="#38d8a0" strokeWidth="2.5" />
                <path d="M801 297h26M827 282h16v30h-16z" stroke="#000" fill="none" />
                <circle cx="808" cy="297" r="2" fill="#000" />
                <rect x="814" y="293.5" width="7" height="7" fill="#000" />
                <rect x="808.5" y="324.5" width="22" height="29" fill="none" stroke="#38d8a0" strokeWidth="1.2" />
                <g fontFamily="Liberation Sans, sans-serif" fontSize="7.5" fill="#222">
                  <text transform="rotate(-90 832 304)" x="832" y="304">15.0</text>
                  <text transform="rotate(-90 841 304)" x="841" y="304">5.0</text>
                  <text transform="rotate(-90 816 348)" x="816" y="348">12.5</text>
                  <text transform="rotate(-90 822 348)" x="822" y="348">0.96</text>
                  <text transform="rotate(-90 829 346)" x="829" y="346">-4.2</text>
                </g>
                <text transform="rotate(-90 811 405)" x="811" y="405" fontFamily="Liberation Sans, sans-serif" fontSize="11" fill="#222">BARRA D</text>
              </Diagram>
            </Canvas>
            <VScroll $pt={2}>
              <ScrollBtn><Arrow $dir="up" /></ScrollBtn>
              <Thumb $h={167} />
              <Spacer />
              <ScrollBtn><Arrow $dir="down" /></ScrollBtn>
            </VScroll>
          </CanvasRow>
          <HScrollRow>
            <ScrollBtn $w={17}><Arrow $dir="right" /></ScrollBtn>
            <ScrollCorner />
          </HScrollRow>
        </CanvasColumn>
        <Palette>
          {PALETTE.flat().map((icon, i) => (
            <PaletteCell key={i} $pressed={i === 0}>
              {icon && <Glyph>{icon}</Glyph>}
            </PaletteCell>
          ))}
        </Palette>
      </Workspace>
      <DarkLine />
      <OutputArea>
        <OutputMain>
          <OutputTop>
            <OutputText />
            <VScroll>
              <ScrollBtn><Arrow $dir="up" /></ScrollBtn>
              <Spacer />
              <Thumb $h={17} />
              <Spacer />
              <ScrollBtn><Arrow $dir="down" /></ScrollBtn>
            </VScroll>
          </OutputTop>
          <OutputHScroll>
            <ScrollBtn><Arrow $dir="left" /></ScrollBtn>
            <Thumb />
            <Spacer />
            <ScrollBtn $w={17}><Arrow $dir="right" /></ScrollBtn>
            <OutputCorner />
          </OutputHScroll>
        </OutputMain>
        <OutputTools>
          <OutputIcons />
        </OutputTools>
      </OutputArea>
      <StatusBar>
        <StatusCell $w={121} $ml={177}>Grid</StatusCell>
        <StatusCell $w={35} $ml={15} $off $align="center">Freeze</StatusCell>
        <StatusCell $w={65} $ml={5} $align="center">Ortho</StatusCell>
        <StatusCell $w={28} $ml={5} $align="center">Snap</StatusCell>
        <StatusCell $w={213} $ml={15} />
        <StatusCell $w={59} $ml={4} $align="center">DB 1715</StatusCell>
        <StatusCell $w={124} $ml={5} $align="left">7/2/2106 0:28:15</StatusCell>
        <StatusCell $w={143} $ml={5}>Simulacion 1</StatusCell>
      </StatusBar>
      <Taskbar>
        <TaskIcons />
        <TrayIcons />
      </Taskbar>

      <Dialog>
        <DialogTitle>
          <span>Synchronous Machine - Grid\Synchronous Machine.ElmSym</span>
          <svg width="13" height="13" viewBox="0 0 13 13" stroke="#222" fill="none">
            <path d="M1 1l11 11M12 1L1 12" />
          </svg>
        </DialogTitle>
        <DialogBody>
          <NavList>
            {NAV.map((n) => (
              <NavItem key={n.t} $selected={n.selected} $off={n.off} $line={n.line}>
                {n.t}
              </NavItem>
            ))}
          </NavList>
          <MainColumn>
            <TabRow>
              <Tab $w={51} $active>General</Tab>
              <Tab $w={60}>Advanced</Tab>
              <Tab $w={104}>Automatic Dispatch</Tab>
            </TabRow>
            <TabPanel>
              <TopRow>
                <CheckColumn>
                  <CheckRow>
                    <CheckBox />
                    Spinning if circuit-breaker is open
                  </CheckRow>
                  <CheckRow>
                    <CheckBox />
                    Reference Machine
                  </CheckRow>
                  <CheckRow $h={19} $color={NAVY}>
                    <BusLabel>Corresponding Bus Type:</BusLabel>
                    PQ
                  </CheckRow>
                </CheckColumn>
                <ModeGroup $mt={3} $w={263} $h={62}>
                  <Legend>Mode of Local Voltage Controller</Legend>
                  <RadioRow>
                    <Radio><RadioDot /></Radio>
                    Power Factor
                  </RadioRow>
                  <RadioRow>
                    <Radio />
                    Voltage
                  </RadioRow>
                </ModeGroup>
              </TopRow>
              <ControllerRow $mt={8}>
                <ControllerLabel $w={157}>External Secondary Controller</ControllerLabel>
                <ArrowPair />
                <Ellipsis>...</Ellipsis>
              </ControllerRow>
              <ControllerRow>
                <ControllerLabel $w={157}>External Station Controller</ControllerLabel>
                <ArrowPair />
                <Ellipsis>...</Ellipsis>
              </ControllerRow>
              <MiddleRow>
                <Group $w={265} $h={179}>
                  <Legend>Dispatch</Legend>
                  <FormRow>
                    <FormLabel>Input Mode</FormLabel>
                    <Combo $w={93}>
                      Default
                      <ComboBtn><Arrow $dir="down" /></ComboBtn>
                    </Combo>
                    <SmallBtn>...</SmallBtn>
                  </FormRow>
                  <FormRow $mt={8}>
                    <FormLabel>Active Power</FormLabel>
                    <Field $w={61}>0,</Field>
                    <Unit>MW</Unit>
                  </FormRow>
                  <FormRow>
                    <FormLabel>Reactive Power</FormLabel>
                    <Field $w={61}>0,</Field>
                    <Unit>Mvar</Unit>
                  </FormRow>
                  <FormRow $mt={2} $off>
                    <FormLabel>Voltage</FormLabel>
                    <Field $w={61} $off>1,</Field>
                    <Unit>p.u.</Unit>
                  </FormRow>
                  <FormRow $off>
                    <FormLabel>Angle</FormLabel>
                    <Field $w={61} $off>0,</Field>
                    <Unit>deg</Unit>
                  </FormRow>
                  <FormRow $mt={1}>
                    <FormLabel>Prim. Frequency Bias</FormLabel>
                    <Field $w={61}>0,</Field>
                    <Unit>MW/Hz</Unit>
                  </FormRow>
                </Group>
                <CurveColumn>
                  <CurveTitle>Capability Curve</CurveTitle>
                  <PlotBox>
                    <Plot />
                  </PlotBox>
                </CurveColumn>
              </MiddleRow>
              <Group $mt={10} $w={524} $h={117}>
                <Legend>Reactive Power Operational Limits</Legend>
                <FormRow>
                  <ControllerLabel $w={98}>Capability Curve</ControllerLabel>
                  <ArrowPair />
                  <Ellipsis>...</Ellipsis>
                </FormRow>
                <CheckRow $h={19}>
                  <CheckBox />
                  Use limits specified in type
                </CheckRow>
                <LimitGrid $cols="44px 74px 40px 75px 47px 120px 75px auto">
                  <CapabilityRowLimits label="Min." a="-1," b="-28,1" scaling="Scaling Factor (min.)" c="100," />
                  <CapabilityRowLimits label="Max." a="1," b="28,1" scaling="Scaling Factor (max.)" c="100," />
                </LimitGrid>
              </Group>
              <Group $mt={8} $w={524} $h={72}>
                <Legend>Active Power Operational Limits</Legend>
                <LimitGrid $cols="44px 74px 249px 35px auto">
                  <span>Min.</span>
                  <Field $w={75}>0,</Field>
                  <UnitCell>MW</UnitCell>
                  <span />
                  <span />
                  <span>Max.</span>
                  <Field $w={75}>9999,</Field>
                  <UnitCell>MW</UnitCell>
                  <UnitCell $navy $pl={0}>Pn</UnitCell>
                  <UnitCell $navy $pl={0}>23,885 MW</UnitCell>
                </LimitGrid>
              </Group>
              <Group $mt={9} $w={524} $h={49}>
                <Legend>Active Power: Rating</Legend>
                <LimitGrid $cols="44px 74px 40px 114px 75px 20px 35px auto">
                  <span>Max.</span>
                  <Field $w={75}>23,885</Field>
                  <UnitCell>MW</UnitCell>
                  <span>Rating Factor</span>
                  <Field $w={75}>1,</Field>
                  <span />
                  <UnitCell $navy $pl={0}>Pn</UnitCell>
                  <UnitCell $navy $pl={0}>23,885 MW</UnitCell>
                </LimitGrid>
              </Group>
            </TabPanel>
          </MainColumn>
          <ButtonColumn>
            <DlgButton $def $fs={12.5}>OK</DlgButton>
            <DlgButton>Cancel</DlgButton>
            <DlgButton>Figure &gt;&gt;</DlgButton>
            <DlgButton>Jump to ...</DlgButton>
          </ButtonColumn>
        </DialogBody>
      </Dialog>
    </Shell>
  );
}
